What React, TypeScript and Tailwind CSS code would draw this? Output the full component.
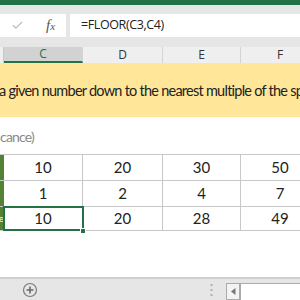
import { Check } from 'lucide-react'

const cols = [
  { key: 'C', w: 'w-[79px]' },
  { key: 'D', w: 'w-[80px]' },
  { key: 'E', w: 'w-[78px]' },
  { key: 'F', w: 'w-[79px]' }
]

const rows = [
  { h: 'h-[26px]', values: ['10', '20', '30', '50'] },
  { h: 'h-[26px]', values: ['1', '2', '4', '7'] },
  { h: 'h-[24px]', values: ['10', '20', '28', '49'], selected: true }
]

export default function App() {
  return (
    <div className="w-[300px] h-[300px] overflow-hidden bg-white flex flex-col font-['Open_Sans',sans-serif]">
      {/* Ribbon edge */}
      <div className="h-[5px] shrink-0 bg-[#217346]" />
      <div className="h-[9px] shrink-0 bg-[#e6e6e6]" />

      {/* Formula bar */}
      <div className="h-[23px] shrink-0 flex bg-[#e6e6e6]">
        <div className="w-[66px] bg-white flex items-center">
          <Check size={13} strokeWidth={2} className="ml-[11px] text-[#b8b8b8]" />
          <span className="ml-[22px] font-['Liberation_Serif',serif] italic text-[15px] text-[#555] leading-none">
            f<span className="text-[11px]">x</span>
          </span>
        </div>
        <div className="ml-[4px] flex-1 bg-white flex items-center pl-[11px] text-[12.5px] text-[#222] tracking-[-0.4px]">
          =FLOOR(C3,C4)
        </div>
      </div>
      <div className="h-[10px] shrink-0 bg-[#e6e6e6]" />

      {/* Column headers */}
      <div className="h-[16px] shrink-0 flex bg-[#efefef] text-[12px] leading-none">
        <div className="w-[4px] shrink-0 border-r border-[#c8c8c8]" />
        {cols.map((c) => (
          <div
            key={c.key}
            className={`${c.w} shrink-0 flex items-center justify-center border-r border-[#d4d4d4] ${
              c.key === 'C'
                ? 'bg-[#d2d2d2] text-[#217346] border-b-2 border-b-[#217346]'
                : 'text-[#333]'
            }`}
          >
            {c.key}
          </div>
        ))}
      </div>

      {/* Title band */}
      <div className="h-[54px] shrink-0 bg-[#ffe699] flex items-center font-['Lato',sans-serif] text-[14.5px] tracking-[-0.75px] text-[#222] whitespace-nowrap overflow-hidden">
        <span className="-ml-[1px] mt-[1px]">a given number down to the nearest multiple of the sp</span>
      </div>

      <div className="h-[37px] shrink-0 flex items-center font-['Lato',sans-serif] text-[14px] tracking-[-0.8px] text-[#8a8a8a] whitespace-nowrap">
        <span className="mt-[2px]">cance)</span>
      </div>

      {/* Table */}
      <div className="shrink-0 border-t border-[#c8c8c8] font-['Lato',sans-serif] text-[15px] text-[#222]">
        {rows.map((r, i) => (
          <div key={i} className={`${r.h} flex border-b border-[#c8c8c8]`}>
            <div className="w-[4px] shrink-0 bg-[#548235] flex items-center justify-end overflow-hidden text-[10px] text-white">
              {r.selected ? 'e' : ''}
            </div>
            {r.values.map((v, j) => (
              <div
                key={j}
                className={`${cols[j].w} shrink-0 flex items-center justify-center border-r border-[#c8c8c8] relative ${
                  r.selected && j === 0 ? 'outline-2 outline-[#217346] -outline-offset-1' : ''
                }`}
              >
                {v}
                {r.selected && j === 0 && (
                  <span className="absolute -right-[4px] -bottom-[4px] w-[6px] h-[6px] bg-[#217346] border border-white" />
                )}
              </div>
            ))}
          </div>
        ))}
      </div>

      <div className="flex-1" />

      {/* Sheet tab bar */}
      <div className="h-[23px] shrink-0 bg-[#e6e6e6] border-t-2 border-[#cfcfcf] flex items-end">
        <div className="w-[60px] h-full flex items-center justify-center">
          <svg width="16" height="16" viewBox="0 0 16 16" className="mt-[1px]">
            <circle cx="8" cy="8" r="6.5" fill="none" stroke="#7a7a7a" strokeWidth="1.2" />
            <path d="M8 4.5v7M4.5 8h7" stroke="#6a6a6a" strokeWidth="1.6" />
          </svg>
        </div>
        <div className="flex-1 h-full flex items-center justify-end pr-[13px]">
          <svg width="3" height="12" viewBox="0 0 3 12">
            <rect x="0.5" y="0" width="2" height="2" fill="#b0b0b0" />
            <rect x="0.5" y="5" width="2" height="2" fill="#b0b0b0" />
            <rect x="0.5" y="10" width="2" height="2" fill="#b0b0b0" />
          </svg>
        </div>
        <div className="w-[74px] h-[17px] flex">
          <div className="w-[14px] h-full bg-[#f3f3f3] border border-[#ababab] flex items-center justify-center">
            <svg width="5" height="7" viewBox="0 0 5 7">
              <path d="M4.5 0v7L0 3.5z" fill="#777" />
            </svg>
          </div>
          <div className="flex-1 h-full bg-white border-t border-l border-[#ababab]" />
        </div>
      </div>
    </div>
  )
}
